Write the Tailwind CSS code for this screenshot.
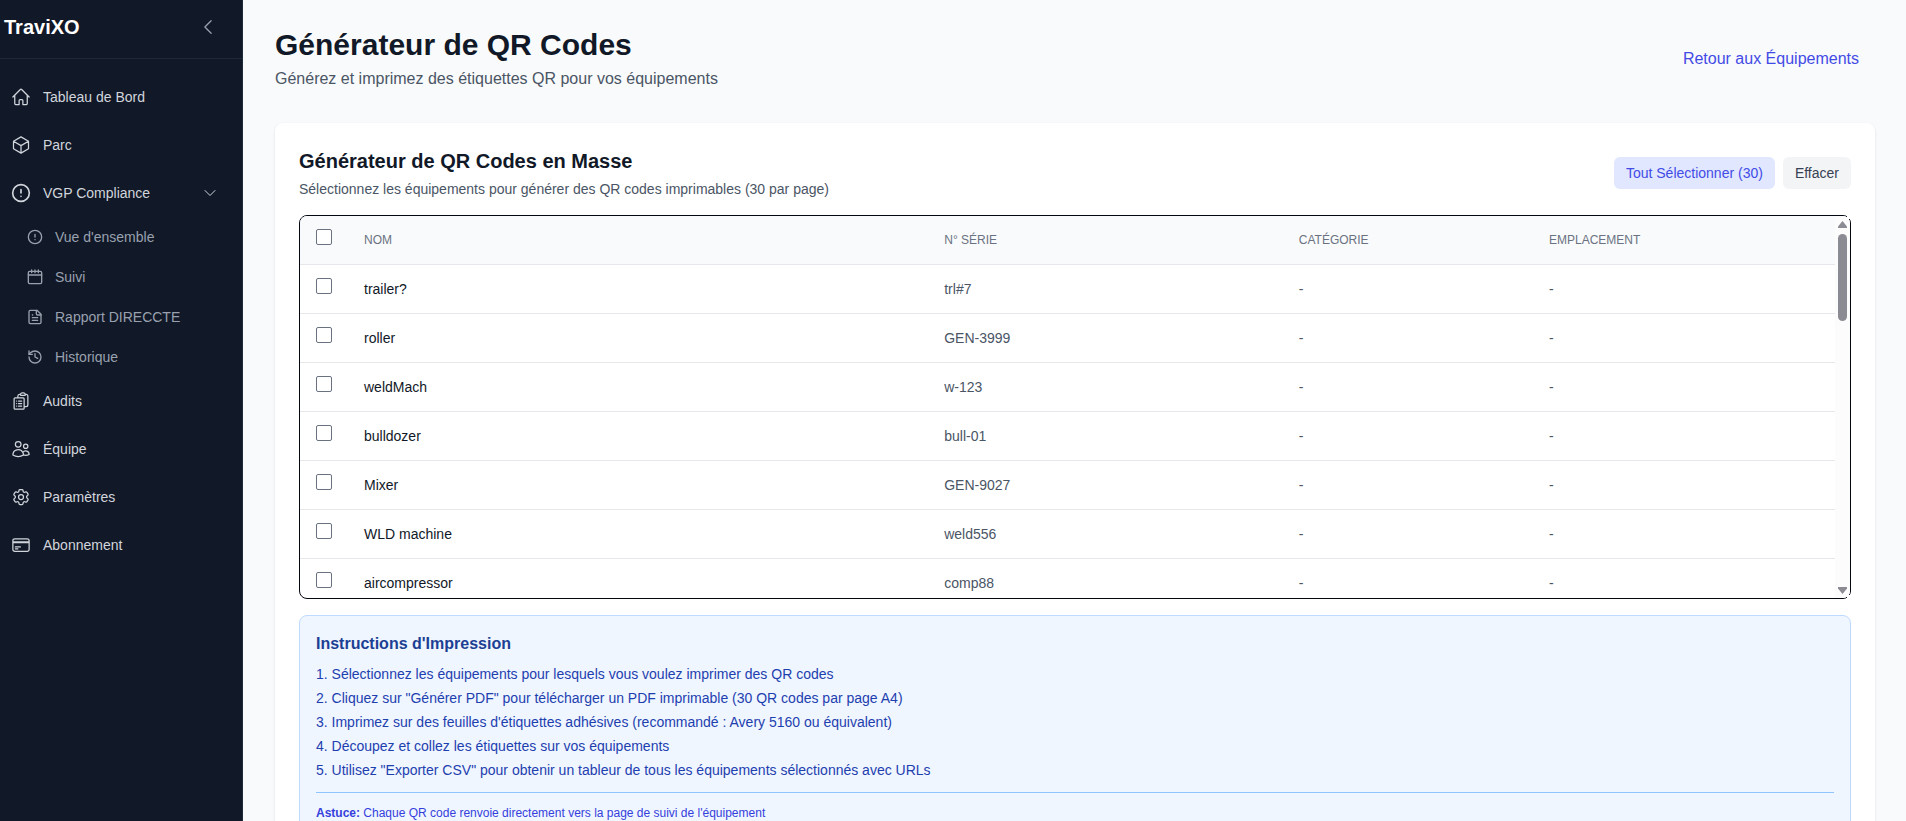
<!DOCTYPE html>
<html lang="fr">
<head>
    <meta charset="UTF-8">
    <meta name="viewport" content="width=device-width, initial-scale=1.0">
    <title>Générateur de QR Codes | TraviXO</title>
    <script src="https://cdn.jsdelivr.net/npm/@tailwindcss/browser@4"></script>
</head>
<body class="bg-gray-50 font-['Liberation_Sans',Arial,sans-serif] text-[#111827]">
<div class="flex min-h-screen">

    <!-- Sidebar -->
    <aside class="sticky top-0 flex h-screen w-[243px] shrink-0 flex-col border-r border-gray-800 bg-[#111827]">
        <div class="flex h-[59px] items-center justify-between border-b border-gray-800 pr-6 pb-1 pl-1">
            <span class="text-xl font-bold text-white">TraviXO</span>
            <button type="button" aria-label="Réduire le menu" class="text-gray-400">
                <svg class="size-5" viewBox="0 0 24 24" fill="none" stroke="currentColor" stroke-width="1.5" stroke-linecap="round" stroke-linejoin="round"><path d="M15.75 19.5 8.25 12l7.5-7.5"/></svg>
            </button>
        </div>

        <nav class="flex flex-col gap-1 py-4 text-sm text-gray-300">
            <a href="#" class="flex items-center gap-3 py-3 pr-6 pl-[11px]">
                <svg class="size-5" viewBox="0 0 24 24" fill="none" stroke="currentColor" stroke-width="1.5" stroke-linecap="round" stroke-linejoin="round"><path d="m2.25 12 8.954-8.955c.44-.439 1.152-.439 1.591 0L21.75 12M4.5 9.75v10.125c0 .621.504 1.125 1.125 1.125H9.75v-4.875c0-.621.504-1.125 1.125-1.125h2.25c.621 0 1.125.504 1.125 1.125V21h4.125c.621 0 1.125-.504 1.125-1.125V9.75"/></svg>
                Tableau de Bord
            </a>
            <a href="#" class="flex items-center gap-3 py-3 pr-6 pl-[11px]">
                <svg class="size-5" viewBox="0 0 24 24" fill="none" stroke="currentColor" stroke-width="1.5" stroke-linecap="round" stroke-linejoin="round"><path d="m21 7.5-9-5.25L3 7.5m18 0-9 5.25m9-5.25v9l-9 5.25M3 7.5l9 5.25M3 7.5v9l9 5.25m0-9v9"/></svg>
                Parc
            </a>
            <button type="button" aria-expanded="true" class="flex items-center gap-3 py-3 pr-6 pl-[11px]">
                <svg class="size-5" viewBox="0 0 24 24" fill="none" stroke="currentColor" stroke-width="2" stroke-linecap="round" stroke-linejoin="round"><circle cx="12" cy="12" r="10"/><path d="M12 8v4M12 16h.01"/></svg>
                <span class="flex-1 text-left">VGP Compliance</span>
                <svg class="size-4" viewBox="0 0 24 24" fill="none" stroke="currentColor" stroke-width="1.5" stroke-linecap="round" stroke-linejoin="round"><path d="m19.5 8.25-7.5 7.5-7.5-7.5"/></svg>
            </button>

            <div class="flex flex-col gap-1 text-gray-400">
                <a href="#" class="flex items-center gap-3 py-2 pr-6 pl-[27px]">
                    <svg class="size-4" viewBox="0 0 24 24" fill="none" stroke="currentColor" stroke-width="2" stroke-linecap="round" stroke-linejoin="round"><circle cx="12" cy="12" r="10"/><path d="M12 8v4M12 16h.01"/></svg>
                    Vue d'ensemble
                </a>
                <a href="#" class="flex items-center gap-3 py-2 pr-6 pl-[27px]">
                    <svg class="size-4" viewBox="0 0 24 24" fill="none" stroke="currentColor" stroke-width="2" stroke-linecap="round" stroke-linejoin="round"><path d="M7 1.500v4M12 1.500v4M17 1.500v4M2 9h20"/><rect x="2" y="3.500" width="20" height="18.500" rx="2"/></svg>
                    Suivi
                </a>
                <a href="#" class="flex items-center gap-3 py-2 pr-6 pl-[27px]">
                    <svg class="size-4" viewBox="0 0 24 24" fill="none" stroke="currentColor" stroke-width="2" stroke-linecap="round" stroke-linejoin="round"><path d="M15 2H5a2 2 0 0 0-2 2v16a2 2 0 0 0 2 2h14a2 2 0 0 0 2-2V8Z"/><path d="M14 2v5a2 2 0 0 0 2 2h5M8 9h.5M8 13h8M8 17h8"/></svg>
                    Rapport DIRECCTE
                </a>
                <a href="#" class="flex items-center gap-3 py-2 pr-6 pl-[27px]">
                    <svg class="size-4" viewBox="0 0 24 24" fill="none" stroke="currentColor" stroke-width="2" stroke-linecap="round" stroke-linejoin="round"><path d="M3 12a9 9 0 1 0 9-9 9.75 9.75 0 0 0-6.74 2.74L3 8"/><path d="M3 3v5h5M12 7v5l4 2"/></svg>
                    Historique
                </a>
            </div>

            <a href="#" class="flex items-center gap-3 py-3 pr-6 pl-[11px]">
                <svg class="size-5" viewBox="0 0 24 24" fill="none" stroke="currentColor" stroke-width="1.5" stroke-linecap="round" stroke-linejoin="round"><path d="M9 12h3.75M9 15h3.75M9 18h3.75m3 .75H18a2.25 2.25 0 0 0 2.25-2.25V6.108c0-1.135-.845-2.098-1.976-2.192a48.424 48.424 0 0 0-1.123-.08m-5.801 0c-.065.21-.1.433-.1.664 0 .414.336.75.75.75h4.5a.75.75 0 0 0 .75-.75 2.25 2.25 0 0 0-.1-.664m-5.8 0A2.251 2.251 0 0 1 13.5 2.25H15c1.012 0 1.867.668 2.15 1.586m-5.8 0c-.376.023-.75.05-1.124.08C9.095 4.01 8.25 4.973 8.25 6.108V8.25m0 0H4.875c-.621 0-1.125.504-1.125 1.125v11.25c0 .621.504 1.125 1.125 1.125h9.75c.621 0 1.125-.504 1.125-1.125V9.375c0-.621-.504-1.125-1.125-1.125H8.25ZM6.75 12h.008v.008H6.75V12Zm0 3h.008v.008H6.75V15Zm0 3h.008v.008H6.75V18Z"/></svg>
                Audits
            </a>
            <a href="#" class="flex items-center gap-3 py-3 pr-6 pl-[11px]">
                <svg class="size-5" viewBox="0 0 24 24" fill="none" stroke="currentColor" stroke-width="1.5" stroke-linecap="round" stroke-linejoin="round"><path d="M15 19.128a9.38 9.38 0 0 0 2.625.372 9.337 9.337 0 0 0 4.121-.952 4.125 4.125 0 0 0-7.533-2.493M15 19.128v-.003c0-1.113-.285-2.16-.786-3.07M15 19.128v.106A12.318 12.318 0 0 1 8.624 21c-2.331 0-4.512-.645-6.374-1.766l-.001-.109a6.375 6.375 0 0 1 11.964-3.07M12 6.375a3.375 3.375 0 1 1-6.75 0 3.375 3.375 0 0 1 6.75 0Zm8.25 2.25a2.625 2.625 0 1 1-5.25 0 2.625 2.625 0 0 1 5.25 0Z"/></svg>
                Équipe
            </a>
            <a href="#" class="flex items-center gap-3 py-3 pr-6 pl-[11px]">
                <svg class="size-5" viewBox="0 0 24 24" fill="none" stroke="currentColor" stroke-width="1.5" stroke-linecap="round" stroke-linejoin="round"><path d="M9.594 3.94c.09-.542.56-.94 1.11-.94h2.593c.55 0 1.02.398 1.11.94l.213 1.281c.063.374.313.686.645.87.074.04.147.083.22.127.325.196.72.257 1.075.124l1.217-.456a1.125 1.125 0 0 1 1.37.49l1.296 2.247a1.125 1.125 0 0 1-.26 1.431l-1.003.827c-.293.241-.438.613-.43.992a7.723 7.723 0 0 1 0 .255c-.008.378.137.75.43.991l1.004.827c.424.35.534.955.26 1.43l-1.298 2.247a1.125 1.125 0 0 1-1.369.491l-1.217-.456c-.355-.133-.75-.072-1.076.124a6.47 6.47 0 0 1-.22.128c-.331.183-.581.495-.644.869l-.213 1.281c-.09.543-.56.94-1.11.94h-2.594c-.55 0-1.019-.398-1.11-.94l-.213-1.281c-.062-.374-.312-.686-.644-.87a6.52 6.52 0 0 1-.22-.127c-.325-.196-.72-.257-1.076-.124l-1.217.456a1.125 1.125 0 0 1-1.369-.49l-1.297-2.247a1.125 1.125 0 0 1 .26-1.431l1.004-.827c.292-.24.437-.613.43-.991a6.932 6.932 0 0 1 0-.255c.007-.38-.138-.751-.43-.992l-1.004-.827a1.125 1.125 0 0 1-.26-1.43l1.297-2.247a1.125 1.125 0 0 1 1.37-.491l1.216.456c.356.133.751.072 1.076-.124.072-.044.146-.086.22-.128.332-.183.582-.495.644-.869l.214-1.28Z"/><path d="M15 12a3 3 0 1 1-6 0 3 3 0 0 1 6 0Z"/></svg>
                Paramètres
            </a>
            <a href="#" class="flex items-center gap-3 py-3 pr-6 pl-[11px]">
                <svg class="size-5" viewBox="0 0 24 24" fill="none" stroke="currentColor" stroke-width="1.5" stroke-linecap="round" stroke-linejoin="round"><path d="M2.25 8.25h19.5M2.25 9h19.5m-16.5 5.25h6m-6 2.25h3m-3.75 3h15a2.25 2.25 0 0 0 2.25-2.25V6.75A2.25 2.25 0 0 0 19.5 4.5h-15a2.25 2.25 0 0 0-2.25 2.25v10.5A2.25 2.25 0 0 0 4.5 19.5Z"/></svg>
                Abonnement
            </a>
        </nav>
    </aside>

    <!-- Page -->
    <main class="min-w-0 flex-1 pt-[27px] pr-[31px] pb-8 pl-8">
        <header class="mb-8 flex items-center justify-between">
            <div>
                <h1 class="text-3xl font-bold">Générateur de QR Codes</h1>
                <p class="mt-1 text-gray-600">Générez et imprimez des étiquettes QR pour vos équipements</p>
            </div>
            <a href="#" class="px-4 py-2 text-[#434be6]">Retour aux Équipements</a>
        </header>

        <section class="rounded-lg bg-white p-6 shadow-sm">
            <div class="mb-4 flex items-center justify-between">
                <div>
                    <h2 class="text-xl font-semibold">Générateur de QR Codes en Masse</h2>
                    <p class="mt-1 text-sm text-gray-600">Sélectionnez les équipements pour générer des QR codes imprimables (30 par page)</p>
                </div>
                <div class="flex gap-2 text-sm">
                    <button type="button" id="select-all" class="rounded-md bg-indigo-100 px-3 py-1.5 text-[#434be6]">Tout Sélectionner (30)</button>
                    <button type="button" id="clear" class="rounded-md bg-gray-100 px-3 py-1.5 text-gray-700">Effacer</button>
                </div>
            </div>

            <!-- Equipment list -->
            <div class="relative mb-4">
                <div class="flex h-96 overflow-hidden rounded-lg border border-gray-950">
                    <div class="flex-1 overflow-y-auto [scrollbar-width:none]">
                        <table class="w-full table-fixed text-left text-sm">
                            <colgroup>
                                <col class="w-12">
                                <col class="w-[37.8%]">
                                <col class="w-[23.1%]">
                                <col class="w-[16.3%]">
                                <col>
                            </colgroup>
                            <thead class="bg-gray-50 text-xs text-gray-500 uppercase">
                                <tr class="h-12 border-b border-gray-200">
                                    <th class="px-4 pb-1.5"><input type="checkbox" aria-label="Tout sélectionner" class="block size-4 appearance-none rounded-xs border border-gray-500 bg-white checked:bg-indigo-600"></th>
                                    <th class="px-4 font-medium">Nom</th>
                                    <th class="px-4 font-medium">N° Série</th>
                                    <th class="px-4 font-medium">Catégorie</th>
                                    <th class="px-4 font-medium">Emplacement</th>
                                </tr>
                            </thead>
                            <tbody id="rows" class="divide-y divide-gray-200 text-gray-600"></tbody>
                        </table>
                    </div>
                    <div class="flex w-[15px] flex-col items-center bg-[#fcfcfc] pt-[5px] pb-1 text-[#8b8b93]" aria-hidden="true">
                        <svg class="h-[7px] w-[9px]" viewBox="0 0 9 7"><path d="M4.500 0 9 5.500V7H0V5.500Z" fill="currentColor"/></svg>
                        <div class="flex w-full flex-1 justify-center pt-[6px]"><div class="h-[87px] w-[9px] rounded-full bg-[#8b8b93]"></div></div>
                        <svg class="h-[7px] w-[9px]" viewBox="0 0 9 7"><path d="M4.500 7 9 1.500V0H0V1.500Z" fill="currentColor"/></svg>
                    </div>
                </div>
                <!-- square scrollbar corners over the rounded border -->
                <span class="absolute top-0 right-0 size-1 bg-white"></span>
                <span class="absolute right-0 bottom-0 size-1 bg-white"></span>
            </div>

            <!-- Print instructions -->
            <div class="rounded-lg border border-blue-200 bg-blue-50 p-4">
                <h3 class="mb-2 font-semibold text-[#1c3f94]">Instructions d'Impression</h3>
                <ol class="list-none space-y-1 text-sm text-[#1e40af]">
                    <li>1. Sélectionnez les équipements pour lesquels vous voulez imprimer des QR codes</li>
                    <li>2. Cliquez sur "Générer PDF" pour télécharger un PDF imprimable (30 QR codes par page A4)</li>
                    <li>3. Imprimez sur des feuilles d'étiquettes adhésives (recommandé : Avery 5160 ou équivalent)</li>
                    <li>4. Découpez et collez les étiquettes sur vos équipements</li>
                    <li>5. Utilisez "Exporter CSV" pour obtenir un tableur de tous les équipements sélectionnés avec URLs</li>
                </ol>
                <p class="mt-3 border-t border-blue-300 pt-3 text-xs text-[#3540dc]"><strong>Astuce:</strong> Chaque QR code renvoie directement vers la page de suivi de l'équipement</p>
            </div>
        </section>
    </main>
</div>

<script>
    const equipment = [
        ["trailer?", "trl#7"],
        ["roller", "GEN-3999"],
        ["weldMach", "w-123"],
        ["bulldozer", "bull-01"],
        ["Mixer", "GEN-9027"],
        ["WLD machine", "weld556"],
        ["aircompressor", "comp88"]
    ];

    document.getElementById("rows").innerHTML = equipment.map(([name, serial]) => `
        <tr class="h-[49px]">
            <td class="px-4 pb-1.5"><input type="checkbox" aria-label="${name}" class="block size-4 appearance-none rounded-xs border border-gray-500 bg-white checked:bg-indigo-600"></td>
            <td class="px-4 text-[#111827]">${name}</td>
            <td class="px-4">${serial}</td>
            <td class="px-4">-</td>
            <td class="px-4">-</td>
        </tr>`).join("");

    const boxes = document.querySelectorAll("input[type=checkbox]");
    const setAll = (on) => boxes.forEach((box) => { box.checked = on; });
    document.getElementById("select-all").addEventListener("click", () => setAll(true));
    document.getElementById("clear").addEventListener("click", () => setAll(false));
    boxes[0].addEventListener("change", (e) => setAll(e.target.checked));
</script>
</body>
</html>
